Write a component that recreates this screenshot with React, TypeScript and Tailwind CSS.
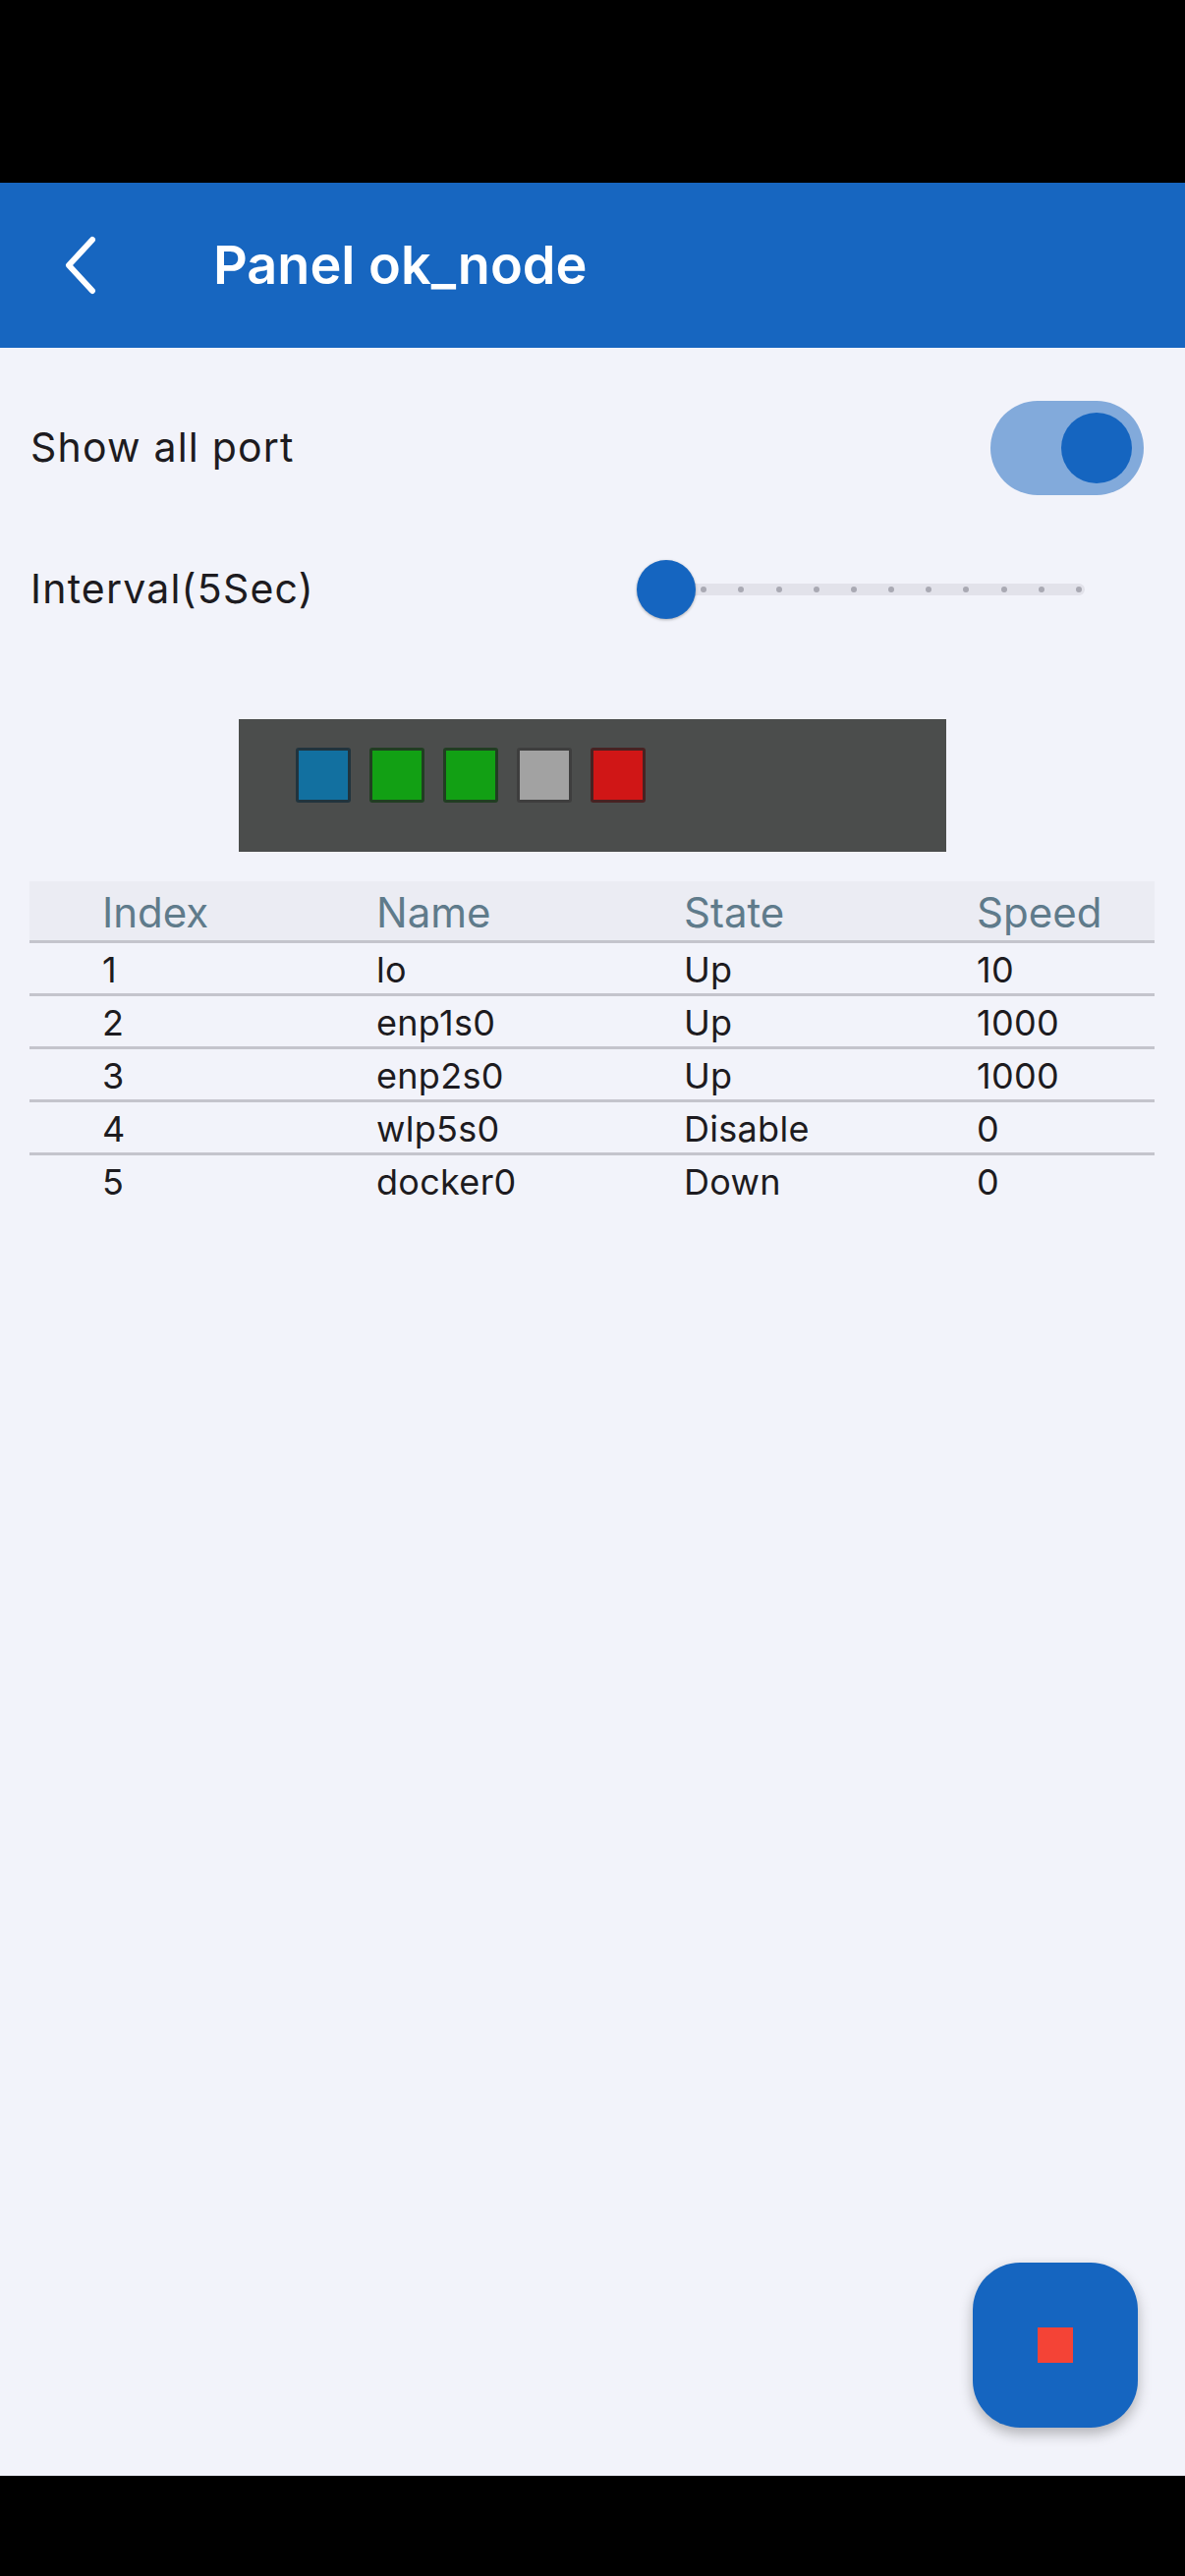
import React from "react";

const ports = [
  { index: 1, name: "lo", state: "Up", speed: "10" },
  { index: 2, name: "enp1s0", state: "Up", speed: "1000" },
  { index: 3, name: "enp2s0", state: "Up", speed: "1000" },
  { index: 4, name: "wlp5s0", state: "Disable", speed: "0" },
  { index: 5, name: "docker0", state: "Down", speed: "0" },
];

const leds = ["bg-[#1270a0]", "bg-[#12a014]", "bg-[#12a014]", "bg-[#a2a2a2]", "bg-[#d01616]"];

function Toggle() {
  return (
    <div className="flex h-[96px] w-[156px] items-center justify-end rounded-full bg-[#82aadb] pr-[12px]">
      <div className="h-[72px] w-[72px] rounded-full bg-[#1565c0]" />
    </div>
  );
}

function Slider() {
  return (
    <div className="relative h-[60px] w-[462px]">
      <div className="absolute left-[24px] right-[6px] top-[24px] flex h-[12px] items-center justify-between rounded-full bg-[#e2e2ea] px-[3px]">
        {Array.from({ length: 12 }).map((_, i) => (
          <span key={i} className="h-[6px] w-[6px] rounded-full bg-[#a9a9b3]" />
        ))}
      </div>
      <div className="absolute left-0 top-0 h-[60px] w-[60px] rounded-full bg-[#1565c0] shadow-[0_1px_3px_rgba(0,0,0,0.3)]" />
    </div>
  );
}

export default function App() {
  return (
    <div className="flex h-[2622px] w-[1206px] flex-col bg-[#f2f3fa] font-['Inter',sans-serif] text-[#1d1b20]">
      <div className="h-[186px] bg-black" />

      <header className="flex h-[168px] items-center bg-[#1766c0] text-white">
        <div className="flex w-[217px] pl-[64px]">
          <svg width="40" height="62" viewBox="0 0 40 62" fill="none">
            <path d="M30 5 L6 31 L30 57" stroke="white" strokeWidth="6" strokeLinecap="round" strokeLinejoin="round" />
          </svg>
        </div>
        <h1 className="text-[54px] font-semibold leading-none">Panel ok_node</h1>
      </header>

      <main className="relative flex-1">
        <div className="mt-[54px] flex h-[96px] items-center justify-between pl-[31px] pr-[42px]">
          <span className="text-[41px] tracking-[1.2px]">Show all port</span>
          <Toggle />
        </div>

        <div className="mt-[66px] flex h-[60px] items-center pl-[31px] pr-[96px]">
          <span className="flex-1 text-[41px] tracking-[1.2px]">Interval(5Sec)</span>
          <Slider />
        </div>

        <div className="mx-auto mt-[102px] flex h-[135px] w-[720px] items-start gap-[19px] bg-[#4b4d4c] pl-[58px] pt-[29px]">
          {leds.map((c, i) => (
            <div key={i} className={`h-[56px] w-[56px] rounded-[3px] border-[3px] border-[#262626]/80 ${c}`} />
          ))}
        </div>

        <div className="ml-[30px] mr-[31px] mt-[30px]">
          <div className="grid h-[63px] grid-cols-[279px_313px_298px_1fr] items-center border-b-[3px] border-[#c4c4cc] bg-[#ebecf3] pl-[74px] text-[42px] text-[#5f7b8b]">
            <span>Index</span>
            <span>Name</span>
            <span>State</span>
            <span>Speed</span>
          </div>
          {ports.map((p, i) => (
            <div
              key={p.index}
              className={`grid h-[54px] grid-cols-[279px_313px_298px_1fr] items-center pl-[74px] text-[36px] tracking-[0.3px] ${i < ports.length - 1 ? "border-b-[3px] border-[#c4c4cc]" : ""}`}
            >
              <span>{p.index}</span>
              <span>{p.name}</span>
              <span>{p.state}</span>
              <span>{p.speed}</span>
            </div>
          ))}
        </div>

        <button className="absolute bottom-[49px] right-[48px] flex h-[168px] w-[168px] items-center justify-center rounded-[48px] bg-[#1565c0] shadow-[0_6px_14px_rgba(0,0,0,0.28)]">
          <span className="h-[36px] w-[36px] bg-[#f44336]" />
        </button>
      </main>

      <div className="h-[102px] bg-black" />
    </div>
  );
}
